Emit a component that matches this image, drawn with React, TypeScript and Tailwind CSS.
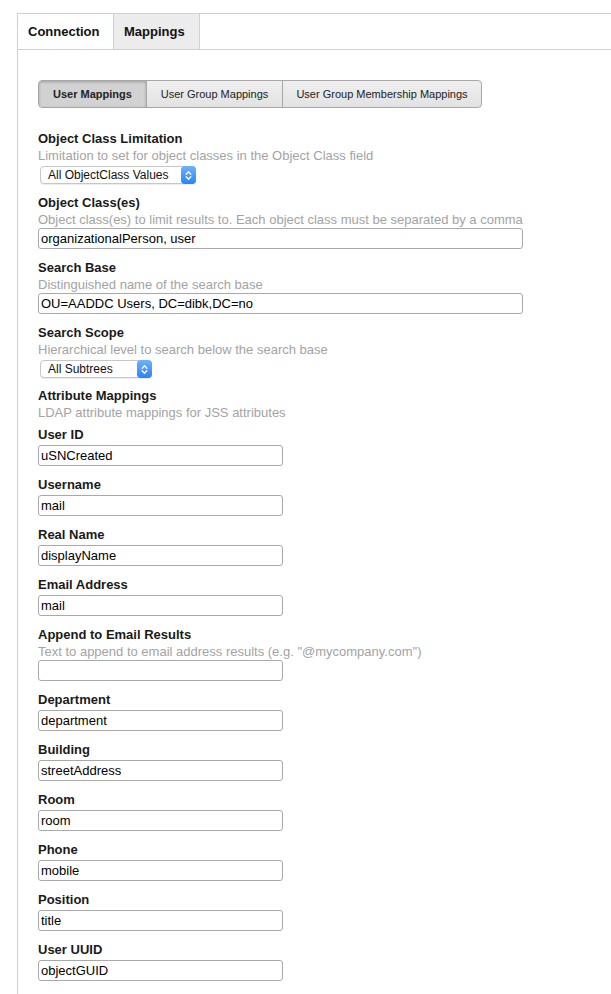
import React from "react";

const Stepper = () => (
    <span className="absolute -right-px -top-px -bottom-px w-[15px] rounded-[4px] bg-gradient-to-b from-[#6db2fb] to-[#2a83f6] flex items-center justify-center">
        <svg width="7" height="11" viewBox="0 0 7 11" fill="none" stroke="white" strokeWidth="1.3" strokeLinecap="round" strokeLinejoin="round">
            <path d="M1.2 4.2 L3.5 1.8 L5.8 4.2" />
            <path d="M1.2 6.8 L3.5 9.2 L5.8 6.8" />
        </svg>
    </span>
);

const SelectBox = ({ value, width }: { value: string; width: string }) => (
    <div className={`relative ml-[2px] h-[18px] ${width} rounded-[4px] border border-[#c6c6c6] bg-white shadow-[0_1px_1px_rgba(0,0,0,0.08)] pl-[7px] text-[12px] leading-[16px] text-[#111]`}>
        {value}
        <Stepper />
    </div>
);

const TextBox = ({ value, wide }: { value: string; wide?: boolean }) => (
    <div className={`h-[21px] ${wide ? "w-[485px]" : "w-[245px]"} rounded-[3px] border border-[#a9a9a9] bg-white pl-[2px] text-[13px] leading-[19px] text-black`}>
        {value}
    </div>
);

const Label = ({ children }: { children: React.ReactNode }) => (
    <div className="h-[16px] text-[13px] leading-[16px] font-bold text-[#1a1a1a]">{children}</div>
);

const Desc = ({ children }: { children: React.ReactNode }) => (
    <div className="mt-[1px] h-[15px] text-[13px] leading-[15px] text-[#a3a3a3] whitespace-nowrap">{children}</div>
);

const mappings: [string, string][] = [
    ["User ID", "uSNCreated"],
    ["Username", "mail"],
    ["Real Name", "displayName"],
    ["Email Address", "mail"],
];

const moreMappings: [string, string][] = [
    ["Department", "department"],
    ["Building", "streetAddress"],
    ["Room", "room"],
    ["Phone", "mobile"],
    ["Position", "title"],
    ["User UUID", "objectGUID"],
];

const App = () =>
{
    return (
        <div className="min-h-screen bg-white pt-[13px] pl-[17px] font-['Liberation_Sans',Arial,sans-serif]">
            <div className="min-h-[981px] border-t border-l border-[#d0d0d0]">
                {/* Tabs */}
                <div className="flex h-[36px] border-b border-[#d0d0d0]">
                    <div className="flex w-[95px] items-center pl-[10px] text-[13px] font-bold text-[#111]">Connection</div>
                    <div className="flex w-[87px] items-center border-x border-[#d0d0d0] bg-[#ececec] pl-[10px] text-[13px] font-bold text-[#111]">Mappings</div>
                </div>

                <div className="pl-[20px] pt-[30px]">
                    {/* Segmented buttons */}
                    <div className="flex h-[28px] w-[444px] overflow-hidden rounded-[4px] border border-[#a8a8a8] bg-gradient-to-b from-[#efefef] to-[#e2e2e2] text-[11px] text-[#222]">
                        <div className="flex w-[108px] items-center justify-center border-r border-[#a8a8a8] bg-[#d2d2d2] font-bold shadow-[inset_0_1px_3px_rgba(0,0,0,0.25)]">User Mappings</div>
                        <div className="flex w-[136px] items-center justify-center border-r border-[#a8a8a8]">User Group Mappings</div>
                        <div className="flex flex-1 items-center justify-center">User Group Membership Mappings</div>
                    </div>

                    {/* Object Class Limitation */}
                    <div className="mt-[23px]">
                        <Label>Object Class Limitation</Label>
                        <Desc>Limitation to set for object classes in the Object Class field</Desc>
                        <div className="mt-[3px]"><SelectBox value="All ObjectClass Values" width="w-[156px]" /></div>
                    </div>

                    <div className="mt-[11px]">
                        <Label>Object Class(es)</Label>
                        <Desc>Object class(es) to limit results to. Each object class must be separated by a comma</Desc>
                        <div className="mt-[1px]"><TextBox value="organizationalPerson, user" wide /></div>
                    </div>

                    <div className="mt-[11px]">
                        <Label>Search Base</Label>
                        <Desc>Distinguished name of the search base</Desc>
                        <div className="mt-[1px]"><TextBox value="OU=AADDC Users, DC=dibk,DC=no" wide /></div>
                    </div>

                    <div className="mt-[11px]">
                        <Label>Search Scope</Label>
                        <Desc>Hierarchical level to search below the search base</Desc>
                        <div className="mt-[3px]"><SelectBox value="All Subtrees" width="w-[112px]" /></div>
                    </div>

                    <div className="mt-[10px]">
                        <Label>Attribute Mappings</Label>
                        <Desc>LDAP attribute mappings for JSS attributes</Desc>
                    </div>

                    <div className="mt-[7px] flex flex-col gap-[11px]">
                        {mappings.map(([label, value]) => (
                            <div key={label}>
                                <Label>{label}</Label>
                                <div className="mt-[2px]"><TextBox value={value} /></div>
                            </div>
                        ))}
                        <div>
                            <Label>Append to Email Results</Label>
                            <Desc>Text to append to email address results (e.g. "@mycompany.com")</Desc>
                            <div className="mt-[1px]"><TextBox value="" /></div>
                        </div>
                        {moreMappings.map(([label, value]) => (
                            <div key={label}>
                                <Label>{label}</Label>
                                <div className="mt-[2px]"><TextBox value={value} /></div>
                            </div>
                        ))}
                    </div>
                </div>
            </div>
        </div>
    );
};

export default App;
